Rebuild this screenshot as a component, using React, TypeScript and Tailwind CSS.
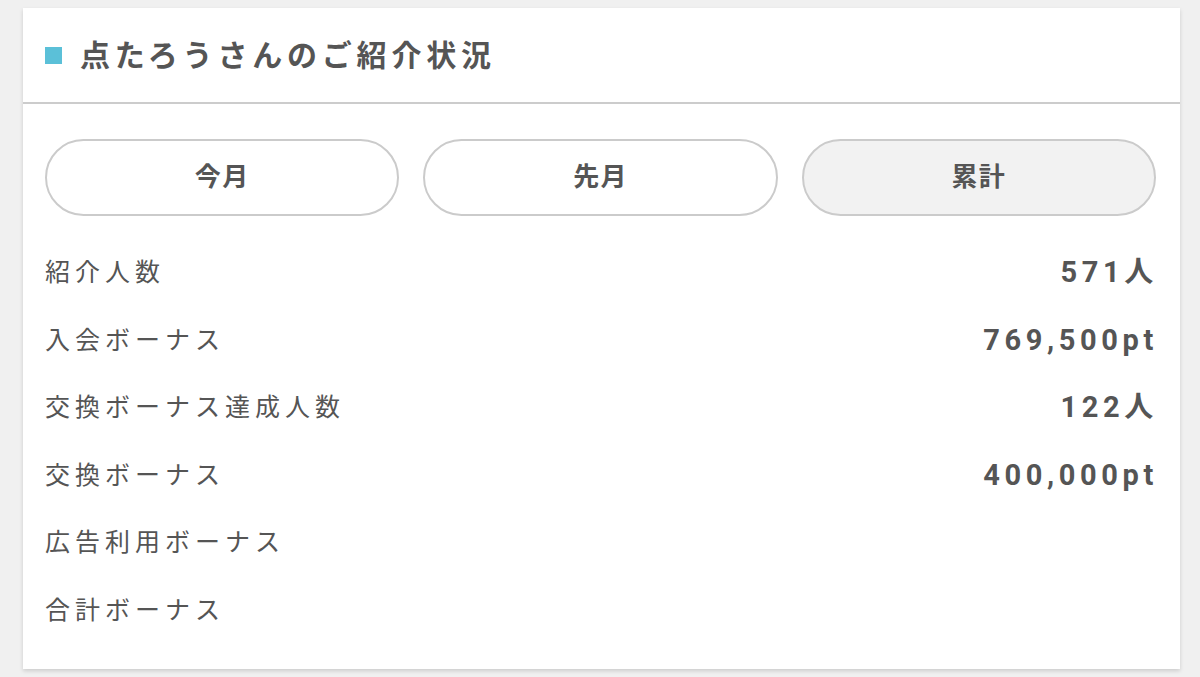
import React from "react";

const rows: { label: string; value: string }[] = [
  { label: "紹介人数", value: "571人" },
  { label: "入会ボーナス", value: "769,500pt" },
  { label: "交換ボーナス達成人数", value: "122人" },
  { label: "交換ボーナス", value: "400,000pt" },
  { label: "広告利用ボーナス", value: "" },
  { label: "合計ボーナス", value: "" },
];

const tabs = ["今月", "先月", "累計"];

const App: React.FC = () => {
  return (
    <div
      className="min-h-[677px] w-[1200px] bg-[#f0f0f0] pt-2 pl-[23px] pr-5 pb-2"
      style={{ fontFamily: '"Roboto", "Noto Sans CJK JP", sans-serif' }}
    >
      <div className="bg-white shadow-[0_2px_4px_rgba(0,0,0,0.15)]">
        {/* header */}
        <div className="flex h-[96px] items-center border-b-2 border-[#cccccc] pl-[22px]">
          <span className="mr-[18px] h-[17px] w-[17px] bg-[#5bc0d8]" />
          <h2 className="text-[30px] font-bold tracking-[0.16em] text-[#555555]">
            点たろうさんのご紹介状況
          </h2>
        </div>

        <div className="pl-[22px] pr-[24px] pt-[35px] pb-[24px]">
          {/* tabs */}
          <div className="grid grid-cols-3 gap-6">
            {tabs.map((t, i) => (
              <button
                key={t}
                className={
                  i === 2
                    ? "h-[77px] rounded-full border-2 border-[#cbcbcb] bg-[#f2f2f2] text-[26px] font-bold tracking-[0.05em] text-[#555555]"
                    : "h-[77px] rounded-full border-2 border-[#cbcbcb] bg-white text-[26px] font-bold tracking-[0.05em] text-[#555555]"
                }
              >
                {t}
              </button>
            ))}
          </div>

          {/* rows */}
          <div className="mt-[23px] flex flex-col">
            {rows.map((r) => (
              <div key={r.label} className="flex h-[67.6px] items-center justify-between">
                <span className="text-[25px] tracking-[0.2em] text-[#555555]">{r.label}</span>
                <span className="mr-[-2px] text-[29px] font-bold tracking-[0.16em] text-[#555555]">
                  {r.value}
                </span>
              </div>
            ))}
          </div>
        </div>
      </div>
    </div>
  );
};

export default App;
